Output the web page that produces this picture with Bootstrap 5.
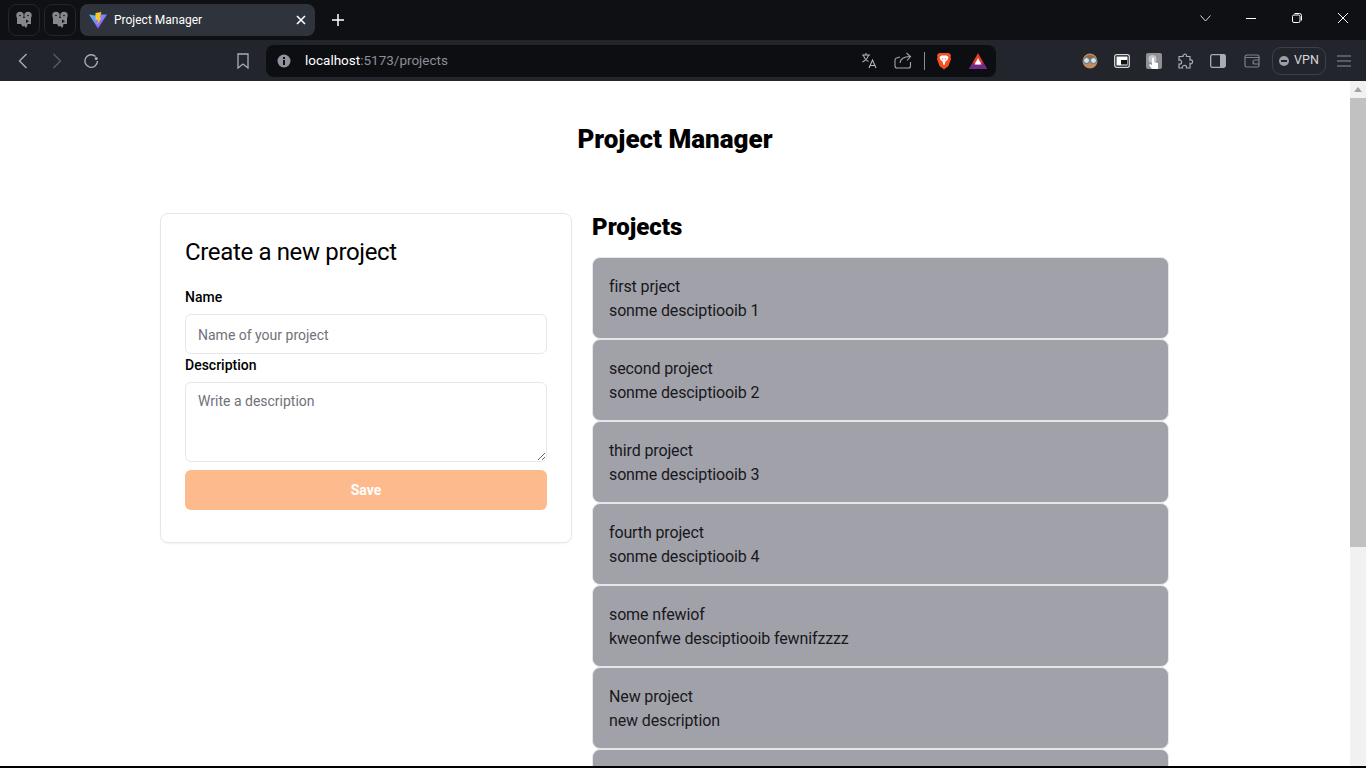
<!DOCTYPE html>
<html lang="en">
<head>
  <meta charset="UTF-8" />
  <meta name="viewport" content="width=device-width, initial-scale=1.0"/>
  <title>Project Manager</title>
  <link href="https://cdn.jsdelivr.net/npm/bootstrap@5.3.3/dist/css/bootstrap.min.css" rel="stylesheet">
  <style>
    html, body { height: 100%; overflow: hidden; }
    body { background: #000; font-family: Roboto, sans-serif; color: #000; }

    /* browser frame */
    .tab-strip { height: 40px; background: #0f1014; padding: 4px 0 4px 8px; }
    .pin-tab { width: 32px; height: 32px; margin-right: 4px; border: 1px solid #24262c; border-radius: 8px; }
    .open-tab { width: 235px; height: 32px; background: #2f333c; border-radius: 8px; padding: 0 9px; color: #fff; font-size: 12px; }
    .open-tab .tab-name { margin-left: 7px; }
    .new-tab { width: 46px; }
    .win-btn { width: 46px; height: 28px; margin-top: -4px; }
    .tool-bar { height: 41px; background: #22252c; padding-left: 6px; }
    .tool-btn { width: 34px; height: 32px; flex: none; }
    .bookmark-btn { margin-left: 118px; margin-right: 6px; }
    .url-bar { width: 730px; height: 32px; flex: none; background: #0d0e12; border-radius: 8px; font-size: 13.5px; padding: 0 9px 0 11px; margin-right: 78px; }
    .url-host { color: #fff; margin-left: 14px; }
    .url-path { color: #8b8f98; }
    .url-share { margin: 0 12px 0 16px; }
    .url-sep { width: 1px; height: 18px; background: #8a8d94; margin-right: 11px; }
    .url-bat { margin-left: 17px; }
    .ext-btn { width: 32px; height: 32px; flex: none; }
    .vpn-pill { width: 54px; height: 28px; margin-left: 6px; border: 1px solid #3c4049; border-radius: 9px; color: #d5d8de; font-size: 12.5px; }
    .vpn-dot { width: 10px; height: 10px; border-radius: 50%; background: #9a9ea7; position: relative; margin-right: 5px; }
    .vpn-dot::after { content: ""; position: absolute; left: 2px; right: 2px; top: 4px; height: 2px; background: #22252c; }
    .menu-btn { width: 36px; }

    /* page */
    .page-area { height: 685px; background: #fff; overflow: hidden; }
    .page-body { width: 1350px; }
    .page-title { font-size: 26px; font-weight: 900; line-height: 32px; margin: 42px 0 58px; text-align: center; }
    .columns { width: 1009px; margin-left: 160px; gap: 20px; }
    .new-card { width: 412px; height: 330px; flex: none; border: 1px solid #e5e7eb; border-radius: 8px; padding: 24px; box-shadow: 0 1px 2px rgba(0,0,0,.05); }
    .new-card h2 { font-size: 24px; font-weight: 400; line-height: 28px; letter-spacing: -.35px; margin: 0 0 21px; }
    .field-label { display: block; font-size: 14px; font-weight: 500; line-height: 20px; margin-bottom: 7px; }
    .field-input { height: 40px; border: 1px solid #e5e7eb; border-radius: 6px; padding: 2px 12px 0; font-size: 14px; margin-bottom: 1px; }
    .field-area { height: 80px; padding: 8px 12px; margin-bottom: 8px; }
    .field-input::placeholder { color: #71717a; }
    .save-btn { height: 40px; width: 100%; background: #fdba8c; border: 0; border-radius: 6px; color: #fff; font-size: 14px; font-weight: 700; }
    .save-btn:disabled { background: #fdba8c; color: #fff; opacity: 1; }
    .list-col { flex: 1; }
    .list-col h2 { font-size: 24px; font-weight: 900; line-height: 28px; margin: 0 0 16px; }
    .proj-item { height: 82px; flex: none; background: #a1a1aa; border: 1px solid #e5e7eb; border-radius: 8px; padding: 17px 16px 15px; font-size: 16px; line-height: 24px; letter-spacing: -.13px; color: #18181b; }

    /* scrollbar */
    .scroll-track { width: 16px; background: #f1f1f1; }
    .scroll-arrow { height: 17px; }
    .scroll-thumb { height: 449px; background: #c1c1c1; }
  </style>
</head>
<body>
  <div class="tab-strip d-flex align-items-center">
    <div class="pin-tab d-flex align-items-center justify-content-center">
      <svg width="18" height="18" viewBox="0 0 18 18" fill="#85878c"><circle cx="5" cy="4.500" r="3.700"/><circle cx="13" cy="4.500" r="3.700"/><path d="M2 7h14v6h-3.500l-.5 2.500-1 1.500-1.500-2-2 .5L6 13H2z"/><path d="M11 8.500l3 1.800-3 1.800z" fill="#0f1014"/><circle cx="5" cy="4.500" r=".8" fill="#0f1014"/><circle cx="13" cy="4.500" r=".8" fill="#0f1014"/></svg>
    </div>
    <div class="pin-tab d-flex align-items-center justify-content-center">
      <svg width="18" height="18" viewBox="0 0 18 18" fill="#85878c"><circle cx="5" cy="4.500" r="3.700"/><circle cx="13" cy="4.500" r="3.700"/><path d="M2 7h14v6h-3.500l-.5 2.500-1 1.500-1.500-2-2 .5L6 13H2z"/><path d="M11 8.500l3 1.800-3 1.800z" fill="#0f1014"/><circle cx="5" cy="4.500" r=".8" fill="#0f1014"/><circle cx="13" cy="4.500" r=".8" fill="#0f1014"/></svg>
    </div>
    <div class="open-tab d-flex align-items-center">
      <svg width="18" height="17" viewBox="0 0 18 17"><defs><linearGradient id="vite-g" x1="0" y1="0" x2="1" y2="1"><stop offset="0" stop-color="#41c8ff"/><stop offset="1" stop-color="#bd34fe"/></linearGradient></defs><path d="M0 2.500 6 3.500 11 2.500 18 2.500 9 16.500z" fill="url(#vite-g)"/><path d="M6.500 1 12.500 0 10.500 6 12.500 5.500 8.500 12.500 9 7.500 6.500 8z" fill="#ffc81f"/></svg>
      <span class="tab-name flex-grow-1">Project Manager</span>
      <svg width="10" height="10" viewBox="0 0 10 10" stroke="#fff" stroke-width="1.600"><path d="M1 1l8 8M9 1l-8 8"/></svg>
    </div>
    <div class="new-tab d-flex justify-content-center">
      <svg width="12" height="12" viewBox="0 0 12 12" stroke="#fff" stroke-width="1.500"><path d="M6 0v12M0 6h12"/></svg>
    </div>
    <div class="flex-grow-1"></div>
    <div class="win-btn d-flex align-items-center justify-content-center">
      <svg width="11" height="7" viewBox="0 0 11 7" fill="none" stroke="#d8d9dc"><path d="M.5.5l5 5.500 5-5.500"/></svg>
    </div>
    <div class="win-btn d-flex align-items-center justify-content-center">
      <svg width="10" height="10" viewBox="0 0 10 10" stroke="#fff"><path d="M0 5.500h10"/></svg>
    </div>
    <div class="win-btn d-flex align-items-center justify-content-center">
      <svg width="10" height="10" viewBox="0 0 10 10" fill="none" stroke="#fff"><rect x=".5" y="2" width="7.500" height="7.500" rx="1.500"/><path d="M2.500.5h5a2 2 0 0 1 2 2v5"/></svg>
    </div>
    <div class="win-btn d-flex align-items-center justify-content-center">
      <svg width="10" height="10" viewBox="0 0 10 10" stroke="#fff"><path d="M0 0l10 10M10 0L0 10"/></svg>
    </div>
  </div>

  <div class="tool-bar d-flex align-items-center">
    <div class="tool-btn d-flex align-items-center justify-content-center">
      <svg width="10" height="16" viewBox="0 0 10 16" fill="none" stroke="#a9adb5" stroke-width="1.400"><path d="M8.500 1 1.500 8l7 7"/></svg>
    </div>
    <div class="tool-btn d-flex align-items-center justify-content-center">
      <svg width="10" height="16" viewBox="0 0 10 16" fill="none" stroke="#585c65" stroke-width="1.400"><path d="M1.500 1l7 7-7 7"/></svg>
    </div>
    <div class="tool-btn d-flex align-items-center justify-content-center">
      <svg width="16" height="16" viewBox="0 0 16 16" fill="none" stroke="#a9adb5" stroke-width="1.400"><path d="M14.500 8a6.300 6.300 0 1 1-2-4.600"/><circle cx="13.200" cy="5.600" r="1.500" fill="#a9adb5" stroke="none"/></svg>
    </div>
    <div class="tool-btn bookmark-btn d-flex align-items-center justify-content-center">
      <svg width="12" height="16" viewBox="0 0 12 16" fill="none" stroke="#a9adb5" stroke-width="1.300"><path d="M1 1h10v14l-5-4-5 4z"/></svg>
    </div>
    <div class="url-bar d-flex align-items-center">
      <svg width="14" height="14" viewBox="0 0 14 14"><circle cx="7" cy="7" r="6.500" fill="#8f939b"/><rect x="6" y="6" width="2" height="5" fill="#0d0e12"/><rect x="6" y="3" width="2" height="2" fill="#0d0e12"/></svg>
      <span class="url-host">localhost</span><span class="url-path">:5173/projects</span>
      <div class="flex-grow-1"></div>
      <svg width="17" height="17" viewBox="0 0 17 17" fill="none" stroke="#b5b8be" stroke-width="1.100"><path d="M1 3h8M5 1v2M2.500 3c.5 3 3 5.500 5 6.500M7.500 3c-.5 2.500-3 5.500-6 7"/><path d="M8 16l3.500-8 3.500 8M9.200 13.500h4.600"/></svg>
      <svg class="url-share" width="18" height="17" viewBox="0 0 18 17" fill="none" stroke="#a3a6ad" stroke-width="1.100"><path d="M16.500 10v4a2 2 0 0 1-2 2H3a2 2 0 0 1-2-2V8a2 2 0 0 1 1.500-2L6 5M6 11c0-4 4-6.500 10-6.500"/><path d="M12.500 1 16.500 4.500 13 8.500"/></svg>
      <div class="url-sep"></div>
      <svg width="16" height="18" viewBox="0 0 16 18"><path d="M3 1h10l2 2-.5 2 .5 2-2.500 7L8 17.500 3.500 14 1 7l.5-2L1 3z" fill="#f5511e"/><path d="M3.500 5 5.500 3.500h5L12.500 5l-1 3-2 1.500L8.500 13h-1l-1-3.500-2-1.500z" fill="#fff"/><path d="M6 6.500h1.500L6.500 8zM10 6.500H8.500L9.500 8z" fill="#f5511e"/></svg>
      <svg class="url-bat" width="18" height="16" viewBox="0 0 18 16"><path d="M9 0 18 16H0z" fill="#e8392a"/><path d="M0 16 4 9.500l5 3 5-3 4 6.500z" fill="#6f2a8c"/><path d="M9 5l3.500 6.500h-7z" fill="#fff"/></svg>
    </div>
    <div class="ext-btn d-flex align-items-center justify-content-center">
      <svg width="16" height="16" viewBox="0 0 16 16"><circle cx="8" cy="8" r="7.500" fill="#c28a60"/><path d="M2 6a6.500 6.500 0 0 1 12 0z" fill="#8a6a50"/><circle cx="4.500" cy="7.500" r="3" fill="#cfe4ec" stroke="#5a6c75"/><circle cx="11.500" cy="7.500" r="3" fill="#cfe4ec" stroke="#5a6c75"/></svg>
    </div>
    <div class="ext-btn d-flex align-items-center justify-content-center">
      <svg width="16" height="14" viewBox="0 0 16 14"><rect x=".7" y=".7" width="14.600" height="12.600" rx="2" fill="#14161a" stroke="#d5d7db" stroke-width="1.300"/><rect x="2.500" y="2.500" width="11" height="9" fill="#fff"/><rect x="7" y="6" width="6" height="4.500" fill="#111"/></svg>
    </div>
    <div class="ext-btn d-flex align-items-center justify-content-center">
      <svg width="16" height="16" viewBox="0 0 16 16"><rect width="16" height="16" rx="2" fill="#8f9196"/><circle cx="6.500" cy="6" r="4" fill="#c4c5c8"/><path d="M6 5.500a1 1 0 0 1 2 0V9l4 1v6H6L3 12l1-1 2 1z" fill="#fff"/></svg>
    </div>
    <div class="ext-btn d-flex align-items-center justify-content-center">
      <svg width="16" height="16" viewBox="0 0 16 16" fill="none" stroke="#a9adb5" stroke-width="1.200"><path d="M6 1.500c1.500-1 3 0 2.500 2H12v3.500c2-.5 3 1 2.500 2.500S12.500 11 12 10.500V15H8.500c.5-2-1-3-2.500-2.500S4 14 4.500 15H1v-4c2 .5 3-1 2.500-2.500S1.500 6.500 1 7V3.500h4c-.3-.8.300-1.600 1-2z"/></svg>
    </div>
    <div class="ext-btn d-flex align-items-center justify-content-center">
      <svg width="16" height="14" viewBox="0 0 16 14"><rect x=".7" y=".7" width="14.600" height="12.600" rx="1.500" fill="none" stroke="#a9adb5" stroke-width="1.300"/><rect x="10" y="1" width="5" height="12" fill="#a9adb5"/></svg>
    </div>
    <div class="ext-btn ps-1 d-flex align-items-center justify-content-center">
      <svg width="16" height="14" viewBox="0 0 16 14" fill="none" stroke="#7d818a" stroke-width="1.200"><path d="M15 4V2.500A1.500 1.500 0 0 0 13.500 1H3a2 2 0 0 0-2 2v8.500A1.500 1.500 0 0 0 2.500 13h11a1.500 1.500 0 0 0 1.500-1.500V10"/><path d="M1.500 3.500H15v6.500h-4a2 2 0 0 1 0-4h4"/></svg>
    </div>
    <div class="vpn-pill d-flex align-items-center justify-content-center">
      <span class="vpn-dot"></span>VPN
    </div>
    <div class="ext-btn menu-btn d-flex align-items-center justify-content-center">
      <svg width="14" height="12" viewBox="0 0 14 12" stroke="#8d9199" stroke-width="1.200"><path d="M0 1h14M0 6h14M0 11h14"/></svg>
    </div>
  </div>

  <div class="page-area d-flex">
    <div class="page-body flex-grow-1">
      <h1 class="page-title">Project Manager</h1>
      <div class="columns d-flex align-items-start">
        <div class="new-card">
          <h2>Create a new project</h2>
          <form>
            <label class="field-label" for="proj-name">Name</label>
            <input id="proj-name" class="form-control field-input" placeholder="Name of your project">
            <label class="field-label" for="proj-desc">Description</label>
            <textarea id="proj-desc" class="form-control field-input field-area" placeholder="Write a description"></textarea>
            <button type="button" class="btn save-btn" disabled>Save</button>
          </form>
        </div>
        <div class="list-col">
          <h2>Projects</h2>
          <div class="d-flex flex-column" id="project-list"></div>
        </div>
      </div>
    </div>
    <div class="scroll-track flex-shrink-0">
      <div class="scroll-arrow d-flex align-items-center justify-content-center">
        <svg width="8" height="5" viewBox="0 0 8 5" fill="#a3a3a3"><path d="M4 0l4 5H0z"/></svg>
      </div>
      <div class="scroll-thumb"></div>
    </div>
  </div>

  <script>
    const projects = [
      { name: "first prject", description: "sonme desciptiooib 1" },
      { name: "second project", description: "sonme desciptiooib 2" },
      { name: "third project", description: "sonme desciptiooib 3" },
      { name: "fourth project", description: "sonme desciptiooib 4" },
      { name: "some nfewiof", description: "kweonfwe desciptiooib fewnifzzzz" },
      { name: "New project", description: "new description" },
      { name: "", description: "" }
    ];
    const list = document.getElementById("project-list");
    projects.forEach(p => {
      const item = document.createElement("div");
      item.className = "proj-item";
      item.innerHTML = `<div>${p.name}</div><div>${p.description}</div>`;
      list.appendChild(item);
    });
  </script>
  <script src="https://cdn.jsdelivr.net/npm/bootstrap@5.3.3/dist/js/bootstrap.bundle.min.js"></script>
</body>
</html>
